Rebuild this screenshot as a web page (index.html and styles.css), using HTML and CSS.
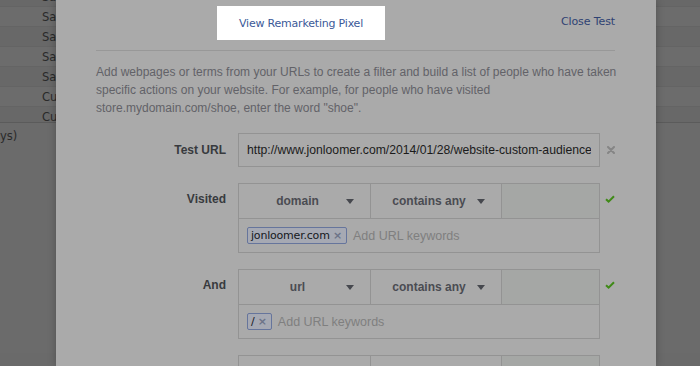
FILE: index.html
```html
<!DOCTYPE html>
<html>
<head>
<meta charset="utf-8">
<link rel="stylesheet" href="styles.css">
</head>
<body>
<div class="page">
  <div class="table">
    <div class="trow alt"><span class="cell">Saved</span></div>
    <div class="trow"><span class="cell">Saved</span></div>
    <div class="trow alt"><span class="cell">Saved</span></div>
    <div class="trow"><span class="cell">Saved</span></div>
    <div class="trow alt"><span class="cell">Saved</span></div>
    <div class="trow"><span class="cell">Custom</span></div>
    <div class="trow alt last"><span class="cell">Custom</span></div>
  </div>
  <div class="note">ys)</div>
</div>

<div class="modal">
  <div class="modal-head">
    <button class="pixel-btn">View Remarketing Pixel</button>
    <a class="close-link">Close Test</a>
  </div>
  <p class="intro">Add webpages or terms from your URLs to create a filter and build a list of people who have taken<br>specific actions on your website. For example, for people who have visited<br>store.mydomain.com/shoe, enter the word "shoe".</p>

  <div class="form">
    <div class="label label-mid">Test URL</div>
    <div class="url-box"><span class="url-text">http://www.jonloomer.com/2014/01/28/website-custom-audience</span></div>
    <div class="icon icon-mid">
      <svg width="8" height="8" viewBox="0 0 8 8"><path d="M1 1L7 7M7 1L1 7" stroke="#858585" stroke-width="2" stroke-linecap="round"/></svg>
    </div>

    <div class="label">Visited</div>
    <div class="filter">
      <div class="sel-row">
        <div class="sel"><span class="sel-text">domain</span><span class="caret"></span></div>
        <div class="sel"><span class="sel-text">contains any</span><span class="caret"></span></div>
        <div class="sel-empty"></div>
      </div>
      <div class="tokens">
        <span class="token">jonloomer.com <span class="tx">×</span></span>
        <span class="placeholder">Add URL keywords</span>
      </div>
    </div>
    <div class="icon">
      <svg width="10" height="8" viewBox="0 0 10 8"><path d="M1 4.2L3.6 6.6L9 1.2" fill="none" stroke="#3f8a17" stroke-width="2"/></svg>
    </div>

    <div class="label">And</div>
    <div class="filter">
      <div class="sel-row">
        <div class="sel"><span class="sel-text">url</span><span class="caret"></span></div>
        <div class="sel"><span class="sel-text">contains any</span><span class="caret"></span></div>
        <div class="sel-empty"></div>
      </div>
      <div class="tokens">
        <span class="token">/ <span class="tx">×</span></span>
        <span class="placeholder">Add URL keywords</span>
      </div>
    </div>
    <div class="icon">
      <svg width="10" height="8" viewBox="0 0 10 8"><path d="M1 4.2L3.6 6.6L9 1.2" fill="none" stroke="#3f8a17" stroke-width="2"/></svg>
    </div>

    <div class="label"></div>
    <div class="filter">
      <div class="sel-row">
        <div class="sel"></div>
        <div class="sel"></div>
        <div class="sel-empty"></div>
      </div>
    </div>
    <div class="icon"></div>
  </div>
</div>
</body>
</html>
```

FILE: styles.css
```css
html, body {
  margin: 0;
  padding: 0;
  width: 700px;
  height: 366px;
  overflow: hidden;
  background: #6a6a6a;
}

.page {
  height: 366px;
  background: #6b6b6b;
}

.table {
  margin-top: -13px;
  border-bottom: 1px solid #5b5b5b;
}

.trow {
  height: 20px;
  background: #6c6c6c;
  border-bottom: 1px solid #646464;
  box-sizing: border-box;
  font-family: "DejaVu Sans", sans-serif;
  font-size: 11.5px;
  line-height: 20px;
  color: #2a2a2a;
  overflow: hidden;
}

.trow.alt {
  background: #686868;
}

.trow.last {
  height: 15px;
  border-bottom: none;
  overflow: visible;
}

.cell {
  display: block;
  width: 56px;
  box-sizing: border-box;
  padding-left: 42px;
  white-space: nowrap;
  overflow: hidden;
}

.note {
  font-family: "DejaVu Sans", sans-serif;
  font-size: 11.5px;
  color: #2a2a2a;
  padding-top: 6px;
  line-height: 14px;
}

.modal {
  position: absolute;
  left: 56px;
  top: 0;
  width: 600px;
  height: 366px;
  box-sizing: border-box;
  padding: 0 41px 0 40px;
  background: #aaaaaa;
  box-shadow: 0 0 8px rgba(0, 0, 0, 0.25);
  overflow: hidden;
}

.modal-head {
  display: flex;
  align-items: flex-start;
  height: 44px;
  padding-top: 6px;
  border-bottom: 1px solid #989898;
}

.pixel-btn {
  margin: 0 0 0 121px;
  width: 168px;
  height: 34px;
  padding: 0;
  border: none;
  background: #ffffff;
  color: #3b5998;
  font-family: "DejaVu Sans", sans-serif;
  font-size: 11px;
  letter-spacing: -0.2px;
  cursor: pointer;
}

.close-link {
  margin-left: auto;
  line-height: 32px;
  color: #2f4273;
  font-family: "DejaVu Sans", sans-serif;
  font-size: 11px;
  letter-spacing: -0.1px;
}

.intro {
  margin: 12px 0 0 0;
  font-family: "Liberation Sans", Arial, sans-serif;
  font-size: 12px;
  line-height: 18px;
  color: #626268;
  white-space: nowrap;
}

.form {
  margin-top: 16px;
  display: grid;
  grid-template-columns: 142px 362px 15px;
  row-gap: 16px;
}

.label {
  padding-right: 12px;
  text-align: right;
  font-family: "Liberation Sans", Arial, sans-serif;
  font-size: 12px;
  font-weight: bold;
  color: #383a3e;
  line-height: 32px;
  align-self: start;
}

.label-mid {
  align-self: center;
  line-height: 16px;
}

.url-box {
  height: 32px;
  border: 1px solid #939393;
  padding: 0 8px;
  font-family: "Liberation Sans", Arial, sans-serif;
  font-size: 12.2px;
  line-height: 32px;
  color: #1b1b1b;
  white-space: nowrap;
  overflow: hidden;
}

.url-text {
  display: block;
  overflow: hidden;
}

.icon {
  display: flex;
  justify-content: flex-end;
  align-items: flex-start;
  padding-top: 12px;
}

.icon-mid {
  align-items: center;
  padding-top: 0;
}

.filter {
  border: 1px solid #939393;
}

.sel-row {
  display: grid;
  grid-template-columns: 132px 131px 1fr;
  height: 34px;
  border-bottom: 1px solid #939393;
}

.sel {
  display: flex;
  align-items: center;
  padding-left: 10px;
  border-right: 1px solid #939393;
  font-family: "Liberation Sans", Arial, sans-serif;
  font-size: 12px;
  font-weight: bold;
  color: #4a4c52;
}

.sel-text {
  flex: 1;
  text-align: center;
}

.caret {
  width: 0;
  height: 0;
  margin: 1px 16px 0 0;
  border-left: 4px solid transparent;
  border-right: 4px solid transparent;
  border-top: 5px solid #46484e;
}

.sel-empty {
  background: #a5a7a5;
}

.tokens {
  display: flex;
  align-items: center;
  height: 33px;
  padding-left: 8px;
  gap: 6px;
}

.token {
  display: inline-flex;
  align-items: center;
  height: 15px;
  padding: 0 4px 0 3px;
  border: 1px solid #66759c;
  border-radius: 2px;
  background: #a6a9b3;
  font-family: "DejaVu Sans", sans-serif;
  font-size: 11px;
  letter-spacing: -0.2px;
  color: #151821;
  white-space: pre;
}

.tx {
  color: #6c7388;
  font-weight: bold;
  font-size: 11px;
}

.placeholder {
  font-family: "Liberation Sans", Arial, sans-serif;
  font-size: 12.5px;
  color: #7f7f7f;
}
```
